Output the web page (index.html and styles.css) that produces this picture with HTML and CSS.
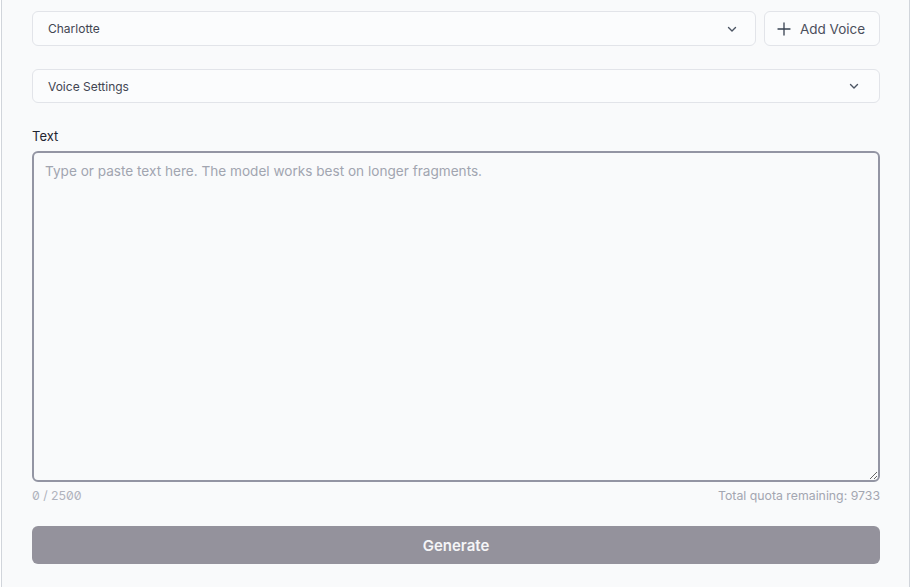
FILE: index.html
```html
<!DOCTYPE html>
<html lang="en">
<head>
  <meta charset="UTF-8">
  <meta name="viewport" content="width=device-width, initial-scale=1.0">
  <title>Speech Synthesis</title>
  <link rel="stylesheet" href="styles.css">
</head>
<body>

<div class="panel">

  <!-- voice picker -->
  <div class="voice-row">
    <div class="select">
      <span>Charlotte</span>
      <svg class="chevron" width="12" height="12" viewBox="0 0 12 12"><path d="M2.5 4.5 6 8l3.5-3.5" fill="none" stroke="#4b5563" stroke-width="1.4" stroke-linecap="round" stroke-linejoin="round"/></svg>
    </div>
    <button class="add-voice">
      <svg width="14" height="14" viewBox="0 0 14 14"><path d="M7 1v12M1 7h12" stroke="#374151" stroke-width="1.3" stroke-linecap="round"/></svg>
      Add Voice
    </button>
  </div>

  <div class="select settings">
    <span>Voice Settings</span>
    <svg class="chevron" width="12" height="12" viewBox="0 0 12 12"><path d="M2.5 4.5 6 8l3.5-3.5" fill="none" stroke="#4b5563" stroke-width="1.4" stroke-linecap="round" stroke-linejoin="round"/></svg>
  </div>

  <label class="field-label" for="text-input">Text</label>
  <textarea id="text-input" class="text-input" placeholder="Type or paste text here. The model works best on longer fragments." autofocus></textarea>

  <div class="counts">
    <span class="char-count">0 / 2500</span>
    <span>Total quota remaining: 9733</span>
  </div>

  <button class="generate" disabled>Generate</button>
</div>

</body>
</html>
```

FILE: styles.css
```css
/* page frame */
body {
  margin: 0;
  background-color: #ffffff;
  font-family: Inter, "Noto Sans", sans-serif;
}

.panel {
  margin-left: 1px;
  height: 587px;
  box-sizing: border-box;
  padding: 11px 29px 0 30px;
  background-color: #f9fafb;
  border-left: 1px solid #d1d5db;
  border-right: 1px solid #d1d5db;
}

/* selects */
.voice-row {
  display: flex;
  gap: 8px;
}

.select {
  flex: 1;
  height: 35px;
  box-sizing: border-box;
  display: flex;
  align-items: center;
  justify-content: space-between;
  padding: 0 16px 0 15px;
  background-color: #fbfcfd;
  border: 1px solid #e2e4e9;
  border-radius: 6px;
  font-size: 12px;
  color: #424652;
}

.voice-row .select {
  padding-right: 17px;
}

.settings {
  margin-top: 23px;
  height: 34px;
  padding-right: 19px;
}

.add-voice {
  width: 116px;
  height: 35px;
  box-sizing: border-box;
  display: flex;
  align-items: center;
  justify-content: center;
  gap: 9px;
  padding: 0 12px 0 10px;
  background-color: #fbfcfd;
  border: 1px solid #e2e4e9;
  border-radius: 6px;
  font-family: inherit;
  font-size: 13.5px;
  color: #4b4f5c;
}

/* text area */
.field-label {
  display: block;
  margin-top: 25px;
  font-size: 13px;
  color: #1f2430;
}

.text-input {
  display: block;
  margin-top: 7px;
  width: 100%;
  height: 331px;
  box-sizing: border-box;
  padding: 10px 11px;
  background-color: #f9fafb;
  border: 2px solid #9395a3;
  border-radius: 6px;
  font-family: inherit;
  font-size: 13.6px;
  color: #1f2430;
  outline: none;
  resize: vertical;
}

.text-input::placeholder {
  color: #a1a5b0;
}

.counts {
  display: flex;
  justify-content: space-between;
  margin-top: 6px;
  font-size: 12.3px;
  color: #a3a6b1;
}

.char-count {
  font-feature-settings: "zero";
  color: #b0b3bd;
}

.generate {
  display: block;
  width: 100%;
  height: 38px;
  margin-top: 23px;
  background-color: #94929c;
  border: none;
  border-radius: 6px;
  font-family: inherit;
  font-size: 15px;
  font-weight: 600;
  color: #f5f5f7;
}
```
